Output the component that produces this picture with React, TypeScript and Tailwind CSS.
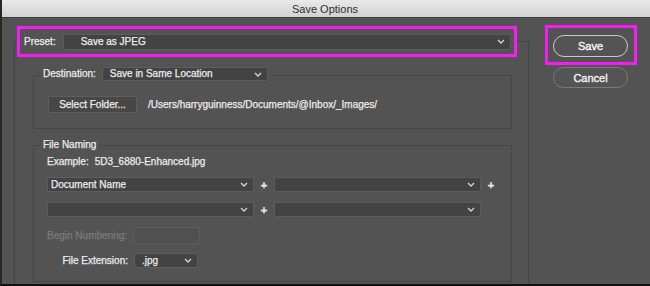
import React from "react";

const Chevron = () => (
  <svg width="8" height="5" viewBox="0 0 8 5" className="shrink-0">
    <path d="M1 1 L4 4 L7 1" fill="none" stroke="#d6d6d6" strokeWidth="1.3" />
  </svg>
);

const Dropdown = ({
  text,
  className,
  pl,
}: {
  text?: string;
  className: string;
  pl: string;
}) => (
  <div
    className={`flex items-center justify-between rounded-[2px] border border-[#5d5d5d] bg-[#434343] pr-[5px] ${pl} ${className}`}
  >
    <span className="truncate whitespace-nowrap text-[10px] leading-[12px] text-[#ececec]">{text}</span>
    <Chevron />
  </div>
);

const Plus = () => (
  <div className="flex w-[20px] items-center justify-center text-[11px] font-bold leading-[12px] text-[#efefef]">+</div>
);

export default function App() {
  return (
    <div
      className="flex h-[286px] w-[650px] flex-col overflow-hidden border-b-2 border-l-2 border-b-[#111] border-l-[#2a2622] bg-[#535353] [-webkit-text-stroke:0.25px_currentcolor]"
      style={{ fontFamily: '"Liberation Sans", Arial, sans-serif' }}
    >
      {/* title bar */}
      <div className="flex h-[18px] shrink-0 items-center justify-center border-b border-[#3a3a3a] bg-gradient-to-b from-[#e9e9e9] to-[#d2d2d2] pr-[2px]">
        <span className="text-[11px] leading-[12px] text-[#2f2f2f] [-webkit-text-stroke:0px]">Save Options</span>
      </div>

      <div className="flex min-h-0 flex-1">
        {/* left column */}
        <div className="ml-[12px] flex w-[515px] flex-col">
          <div className="relative z-10 ml-[3px] mt-[8px] flex h-[31px] w-[500px] items-center border-[3px] border-[#f41ef4] bg-[#535353] pl-[4px] pr-[3px]">
            <span className="text-[10px] leading-[12px] text-[#ececec]">Preset:</span>
            <Dropdown text="Save as JPEG" pl="pl-[17px]" className="ml-[7px] h-[16px] flex-1" />
          </div>

          <div className="-mt-[16px] flex flex-1 flex-col border-l border-r border-t border-[#454545]">
            {/* Destination group */}
            <div className="ml-[18px] mt-[33px] flex w-[479px] flex-col border border-[#464646] pb-[15px]">
              <div className="-mt-[9px] ml-[6px] flex h-[14px] w-fit items-center gap-[6px] bg-[#535353] px-[3px]">
                <span className="text-[10px] leading-[12px] text-[#ececec]">Destination:</span>
                <Dropdown text="Save in Same Location" pl="pl-[7px]" className="h-[14px] w-[166px]" />
              </div>
              <div className="ml-[14px] mt-[15px] flex items-center">
                <div className="flex h-[17px] w-[89px] items-center justify-center rounded-[2px] border border-[#5e5e5e] bg-[#474747]">
                  <span className="whitespace-nowrap text-[10px] leading-[12px] text-[#ececec]">Select Folder...</span>
                </div>
                <span className="ml-[11px] whitespace-nowrap text-[10px] leading-[12px] text-[#ececec]">
                  /Users/harryguinness/Documents/@Inbox/_Images/
                </span>
              </div>
            </div>

            {/* File Naming group */}
            <div className="ml-[18px] mt-[16px] flex h-[137px] w-[479px] flex-col border border-[#464646]">
              <div className="-mt-[8px] ml-[6px] flex h-[14px] w-fit items-center bg-[#535353] px-[3px]">
                <span className="text-[10px] leading-[12px] text-[#ececec]">File Naming</span>
              </div>
              <div className="ml-[13px] mt-[4px] flex h-[12px] items-center gap-[6px]">
                <span className="text-[10px] leading-[12px] text-[#ececec]">Example:</span>
                <span className="text-[10px] leading-[12px] text-[#ececec]">5D3_6880-Enhanced.jpg</span>
              </div>
              <div className="ml-[13px] mt-[9px] flex h-[15px] items-center">
                <Dropdown text="Document Name" pl="pl-[3px]" className="h-[15px] w-[207px]" />
                <Plus />
                <Dropdown pl="pl-[3px]" className="h-[15px] w-[207px]" />
                <Plus />
              </div>
              <div className="ml-[13px] mt-[10px] flex h-[15px] items-center">
                <Dropdown pl="pl-[3px]" className="h-[15px] w-[207px]" />
                <Plus />
                <Dropdown pl="pl-[3px]" className="h-[15px] w-[207px]" />
              </div>
              <div className="ml-[13px] mt-[10px] flex h-[17px] items-center">
                <span className="w-[80px] whitespace-nowrap text-right text-[10px] leading-[12px] text-[#7b7b7b]">Begin Numbering:</span>
                <div className="ml-[6px] h-[17px] w-[67px] shrink-0 rounded-[1px] border border-[#5d5d5d] bg-[#505050]" />
              </div>
              <div className="ml-[13px] mt-[9px] flex h-[15px] items-center">
                <span className="w-[81px] whitespace-nowrap text-right text-[10px] leading-[12px] text-[#ececec]">File Extension:</span>
                <Dropdown text=".jpg" pl="pl-[7px]" className="ml-[6px] h-[15px] w-[64px]" />
              </div>
            </div>
          </div>
        </div>

        {/* right column */}
        <div className="ml-[16px] flex flex-col">
          <div className="mt-[7px] h-[40px] w-[92px] border-[3px] border-[#f41ef4] pl-[5px] pt-[7px]">
            <div className="flex h-[22px] w-[75px] items-center justify-center rounded-full border-[1.5px] border-[#c9c9c9] bg-[#545454]">
              <span className="text-[11px] leading-[12px] text-[#f6f6f6] [-webkit-text-stroke:0.4px_currentcolor]">Save</span>
            </div>
          </div>
          <div className="ml-[8px] mt-[2px] flex h-[21px] w-[75px] items-center justify-center rounded-full border border-[#7a7a7a] bg-[#545454]">
            <span className="text-[11px] leading-[12px] text-[#f0f0f0] [-webkit-text-stroke:0.4px_currentcolor]">Cancel</span>
          </div>
        </div>
      </div>
    </div>
  );
}
